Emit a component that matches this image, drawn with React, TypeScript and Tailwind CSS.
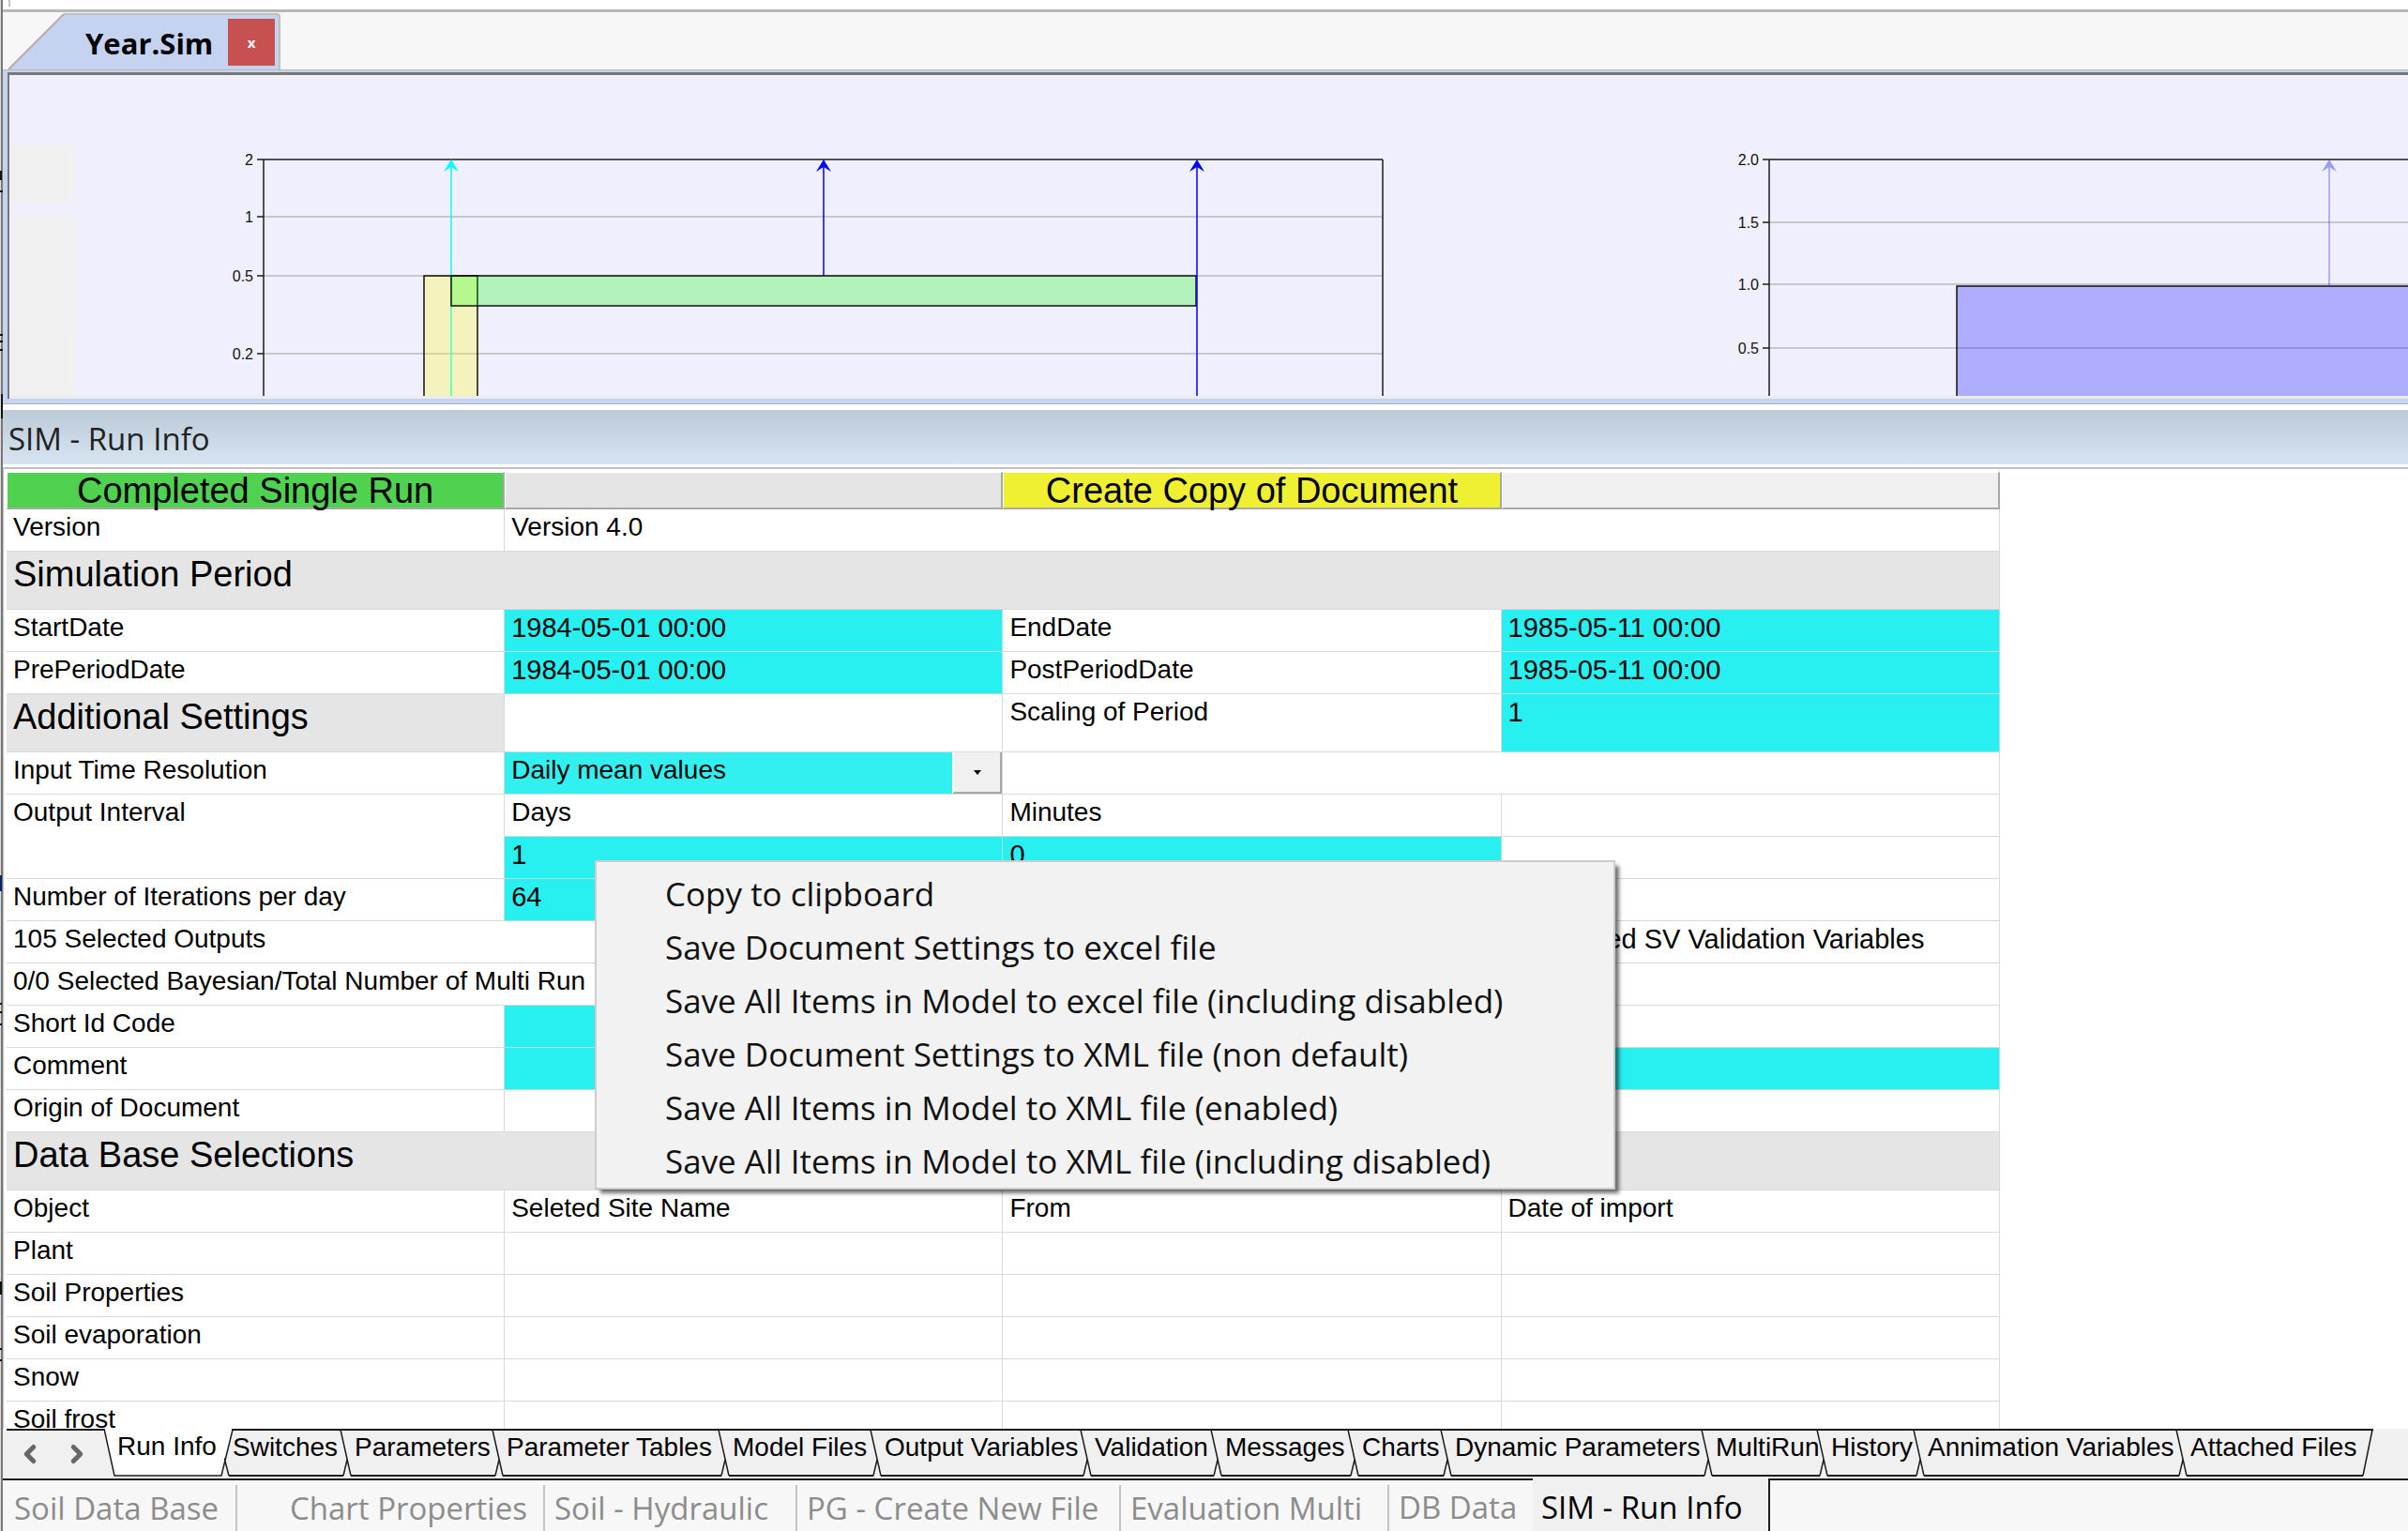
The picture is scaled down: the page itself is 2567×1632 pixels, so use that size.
import type { ReactNode } from 'react';
import { ChevronLeft, ChevronRight } from 'lucide-react';

const UI = "font-['Open_Sans','Noto_Sans',sans-serif]";

const sheetTabs = [
  { label: 'Switches', width: 'w-[116px]' },
  { label: 'Parameters', width: 'w-[162px]' },
  { label: 'Parameter Tables', width: 'w-[241px]' },
  { label: 'Model Files', width: 'w-[162px]' },
  { label: 'Output Variables', width: 'w-[224px]' },
  { label: 'Validation', width: 'w-[139px]' },
  { label: 'Messages', width: 'w-[146px]' },
  { label: 'Charts', width: 'w-[99px]' },
  { label: 'Dynamic Parameters', width: 'w-[278px]' },
  { label: 'MultiRun', width: 'w-[123px]' },
  { label: 'History', width: 'w-[103px]' },
  { label: 'Annimation Variables', width: 'w-[280px]' },
];

const windowTabs = [
  { label: 'Soil Data Base', size: 'w-[250px] pl-3' },
  { label: 'Chart Properties', size: 'w-[328px] pl-14' },
  { label: 'Soil - Hydraulic', size: 'w-[269px] pl-[10px]' },
  { label: 'PG - Create New File', size: 'w-[345px] pl-[10px]' },
  { label: 'Evaluation Multi', size: 'w-[286px] pl-[10px]' },
];

const menuItems = [
  'Copy to clipboard',
  'Save Document Settings to excel file',
  'Save All Items in Model to excel file (including disabled)',
  'Save Document Settings to XML file (non default)',
  'Save All Items in Model to XML file (enabled)',
  'Save All Items in Model to XML file (including disabled)',
];

const siteObjects = ['Plant', 'Soil Properties', 'Soil evaporation', 'Snow', 'Soil frost'];

// slivers of the window that lies behind the left edge
function LeftEdge() {
  return (
    <svg width="3" height="1632" className="block shrink-0">
      <rect width="3" height="1632" fill="#ddd" />
      <rect x="1" width="2" height="1632" fill="#777" />
      <g fill="#111">
        <rect y="182" width="2" height="10" />
        <rect y="203" width="3" height="2" />
        <rect y="356" width="3" height="2" />
        <rect y="363" width="3" height="2" />
        <rect y="372" width="3" height="2" />
        <rect x="1" y="420" width="2" height="26" />
        <rect y="1069" width="2" height="2" />
        <rect y="1078" width="2" height="2" />
        <rect y="1091" width="2" height="2" />
        <rect y="1366" width="2" height="14" />
        <rect y="1437" width="2" height="2" />
        <rect y="1449" width="2" height="2" />
      </g>
      <rect y="933" width="2" height="17" fill="#0a246a" />
    </svg>
  );
}

function DocumentTab() {
  return (
    <div className="flex h-[62px] items-end border-b border-[#b9b9b9] bg-[#f7f7f7] pl-[6px]">
      <svg width="60" height="60" className="block shrink-0">
        <path d="M0 60 L60 1 V60 Z" fill="#c5d3f1" />
        <path d="M0 60 L56 4 Q59 1 60 1" fill="none" stroke="#b0b0b0" strokeWidth="2" />
      </svg>
      <div className="flex h-[60px] items-center rounded-tr border-t-2 border-r-2 border-[#bfbfbf] bg-[#c5d3f1] pr-1 pl-[22px]">
        <span className={`${UI} w-[152px] pt-[2px] text-[31px] leading-[50px] font-bold text-black`}>Year.Sim</span>
        <button
          aria-label="Close"
          className={`${UI} flex h-[50px] w-[50px] items-center justify-center bg-[#c75050] text-[15px] leading-5 font-bold text-white`}
        >
          x
        </button>
      </div>
    </div>
  );
}

function Arrow({ x, to, color, opacity = 1 }: { x: number; to: number; color: string; opacity?: number }) {
  return (
    <g opacity={opacity}>
      <line x1={x} y1={92} x2={x} y2={to} stroke={color} strokeWidth="1.5" />
      <path d={`M${x} 90 L${x + 8} 103 L${x} 98 L${x - 8} 103 Z`} fill={color} />
    </g>
  );
}

function Axis({ x, x2, ticks }: { x: number; x2: number | string; ticks: [number, string][] }) {
  return (
    <g strokeWidth="1.5">
      {ticks.map(([y, label], i) => (
        <g key={label}>
          {i > 0 && <line x1={x} y1={y} x2={x2} y2={y} stroke="#c8c8cc" strokeWidth="2" />}
          <line x1={x - 7} y1={y} x2={x} y2={y} stroke="#1c1c1c" />
          <text x={x - 11} y={y + 6} textAnchor="end" fontSize="16" fill="#111">
            {label}
          </text>
        </g>
      ))}
      <line x1={x} y1={90} x2={x2} y2={90} stroke="#1c1c1c" />
      <line x1={x} y1={90} x2={x} y2={343} stroke="#1c1c1c" />
    </g>
  );
}

function ProfileCharts() {
  return (
    <div className="border-b border-[#b0b0b0] bg-[#c5d3f1] pt-[2px] pb-[5px] pl-[5px]">
      <div className="h-[348px] border-t-[3px] border-l-2 border-[#777] bg-[#f0effe]">
        <svg width="100%" height="345" className="block font-['Liberation_Sans',sans-serif]">
          <g fill="#f0f0f0">
            <rect x="1" y="74" width="68" height="62" />
            <rect x="4" y="149" width="68" height="123" />
            <rect x="1" y="272" width="68" height="71" />
          </g>
          <Axis x={271} x2={1464} ticks={[[90, '2'], [151, '1'], [214, '0.5'], [297, '0.2']]} />
          <line x1="1464" y1="90" x2="1464" y2="343" stroke="#1c1c1c" strokeWidth="1.5" />
          <Arrow x={471} to={343} color="#00ffff" />
          <Arrow x={868} to={214} color="#0000ff" />
          <rect x="442" y="214" width="57" height="130" fill="#ffff00" fillOpacity="0.25" stroke="#111" strokeWidth="1.5" />
          <rect x="471" y="214" width="794" height="32" fill="#00ff00" fillOpacity="0.26" stroke="#111" strokeWidth="1.5" />
          <Arrow x={1266} to={343} color="#0000ff" />
          <Axis x={1876} x2="100%" ticks={[[90, '2.0'], [157, '1.5'], [223, '1.0'], [291, '0.5']]} />
          <rect x="2076" y="225" width="1200" height="130" fill="#0000ff" fillOpacity="0.27" stroke="#111" strokeWidth="1.5" />
          <Arrow x={2473} to={224} color="#0000ff" opacity={0.35} />
          <rect x="0" y="342" width="100%" height="3" fill="#ececec" />
        </svg>
      </div>
    </div>
  );
}

function Cell({ children, span, rows, className = '' }: { children?: ReactNode; span?: number; rows?: number; className?: string }) {
  return (
    <td
      colSpan={span}
      rowSpan={rows}
      className={`border-r border-b border-[#d9d9d9] px-[7px] pt-[3px] pb-0 align-top whitespace-nowrap ${className}`}
    >
      {children}
    </td>
  );
}

function Heading({ children, span }: { children: ReactNode; span?: number }) {
  return (
    <th
      colSpan={span}
      className="h-[62px] border-r border-b border-[#d9d9d9] bg-[#e5e5e5] px-[7px] pt-1 text-left align-top text-[38px] leading-10 font-normal"
    >
      {children}
    </th>
  );
}

function InputCell({ id, value = '', span }: { id: string; value?: string; span?: number }) {
  return (
    <td colSpan={span} className="border-r border-b border-[#b9dcdc] bg-[#28f0f0] p-0 align-top">
      <input
        id={id}
        aria-label={id}
        defaultValue={value}
        className="block h-[35px] w-full bg-transparent px-[7px] pt-[3px] text-[29px] outline-none"
      />
    </td>
  );
}

function HeadButton({ children, className }: { children?: ReactNode; className: string }) {
  return (
    <th className="p-0 font-normal">
      <button
        className={`block h-10 w-full border-t border-r-2 border-b-2 border-l border-t-white border-r-[#a8a8a8] border-b-[#a8a8a8] border-l-white text-[38px] leading-[39px] ${className}`}
      >
        {children}
      </button>
    </th>
  );
}

function RunInfoTable() {
  return (
    <table className="w-[83%] table-fixed border-separate border-spacing-0 [&_tbody_tr]:h-[45px]">
      <thead>
        <tr>
          <HeadButton className="bg-[#50d250]">Completed Single Run</HeadButton>
          <HeadButton className="bg-[#e5e5e5]" />
          <HeadButton className="bg-[#f0f032]">Create Copy of Document</HeadButton>
          <HeadButton className="bg-[#f0f0f0]" />
        </tr>
      </thead>
      <tbody>
        <tr>
          <Cell>Version</Cell>
          <Cell span={3}>Version 4.0</Cell>
        </tr>
        <tr>
          <Heading span={4}>Simulation Period</Heading>
        </tr>
        <tr>
          <Cell><label htmlFor="StartDate">StartDate</label></Cell>
          <InputCell id="StartDate" value="1984-05-01 00:00" />
          <Cell><label htmlFor="EndDate">EndDate</label></Cell>
          <InputCell id="EndDate" value="1985-05-11 00:00" />
        </tr>
        <tr>
          <Cell><label htmlFor="PrePeriodDate">PrePeriodDate</label></Cell>
          <InputCell id="PrePeriodDate" value="1984-05-01 00:00" />
          <Cell><label htmlFor="PostPeriodDate">PostPeriodDate</label></Cell>
          <InputCell id="PostPeriodDate" value="1985-05-11 00:00" />
        </tr>
        <tr>
          <Heading>Additional Settings</Heading>
          <Cell />
          <Cell><label htmlFor="Scaling">Scaling of Period</label></Cell>
          <InputCell id="Scaling" value="1" />
        </tr>
        <tr>
          <Cell><label htmlFor="Resolution">Input Time Resolution</label></Cell>
          <td className="border-r border-b border-[#d9d9d9] bg-[#32f0f0] p-0 align-top">
            <div className="relative h-11">
              <select id="Resolution" className="block h-11 w-full appearance-none px-[7px] pb-[6px] outline-none">
                <option>Daily mean values</option>
              </select>
              <span className="pointer-events-none absolute top-0 right-0 flex h-11 w-[53px] items-center justify-center border-r-2 border-b-2 border-l-2 border-[#a8a8a8] border-l-white bg-[#f0f0f0]">
                <svg width="8" height="5">
                  <path d="M0 0H8L4 5Z" fill="#000" />
                </svg>
              </span>
            </div>
          </td>
          <Cell span={2} />
        </tr>
        <tr>
          <Cell rows={2}>Output Interval</Cell>
          <Cell><label htmlFor="Days">Days</label></Cell>
          <Cell><label htmlFor="Minutes">Minutes</label></Cell>
          <Cell />
        </tr>
        <tr>
          <InputCell id="Days" value="1" />
          <InputCell id="Minutes" value="0" />
          <Cell />
        </tr>
        <tr>
          <Cell><label htmlFor="Iterations">Number of Iterations per day</label></Cell>
          <InputCell id="Iterations" value="64" />
          <Cell span={2} />
        </tr>
        <tr>
          <Cell span={3} className="border-r-white">105 Selected Outputs</Cell>
          <Cell className="text-[29px]">0 Selected SV Validation Variables</Cell>
        </tr>
        <tr>
          <Cell span={4}>0/0 Selected Bayesian/Total Number of Multi Run</Cell>
        </tr>
        <tr>
          <Cell><label htmlFor="ShortId">Short Id Code</label></Cell>
          <InputCell id="ShortId" />
          <Cell span={2} />
        </tr>
        <tr>
          <Cell><label htmlFor="Comment">Comment</label></Cell>
          <InputCell id="Comment" span={3} />
        </tr>
        <tr>
          <Cell>Origin of Document</Cell>
          <Cell span={3} />
        </tr>
        <tr>
          <Heading span={4}>Data Base Selections</Heading>
        </tr>
        <tr>
          <Cell>Object</Cell>
          <Cell>Seleted Site Name</Cell>
          <Cell>From</Cell>
          <Cell>Date of import</Cell>
        </tr>
        {siteObjects.map((name) => (
          <tr key={name}>
            <Cell>{name}</Cell>
            <Cell />
            <Cell />
            <Cell />
          </tr>
        ))}
      </tbody>
    </table>
  );
}

function SheetTabs() {
  return (
    <div className="flex h-[53px] shrink-0 bg-[#f0f0f0] pl-1 text-[28px] leading-8 whitespace-nowrap text-black">
      <div className="flex h-[51px] w-[104px] shrink-0 items-center gap-5 border-t-2 border-[#1c1c1c] pl-[10px] text-[#666]">
        <button aria-label="Previous sheet"><ChevronLeft size={30} strokeWidth={4} /></button>
        <button aria-label="Next sheet"><ChevronRight size={30} strokeWidth={4} /></button>
      </div>
      <button className="relative flex h-[51px] w-[136px] shrink-0 pt-[3px] pl-[14px]">
        <svg width="138" height="52" className="absolute top-0 left-0">
          <path d="M0 0 L11 51 H126 L137 0" fill="#fff" />
          <path d="M0 0 L11 50 H125 L137 1" fill="none" stroke="#1c1c1c" strokeWidth="1.5" />
        </svg>
        <span className="relative">Run Info</span>
      </button>
      {sheetTabs.map(({ label, width }, i) => (
        <button
          key={label}
          className={`relative h-[51px] shrink-0 border-t-2 border-[#1c1c1c] pb-[14px] text-left ${width} ${i === 0 ? 'pl-[1px]' : 'pl-[15px]'}`}
        >
          {label}
          {/* bottom of the tab, and the crossing edges shared with the next one */}
          <span className={`absolute -right-[3px] bottom-0 h-[2px] bg-[#1c1c1c] ${i === 0 ? '-left-[3px]' : 'left-[11px]'}`} />
          {i === 0 && (
            <svg width="8" height="20" className="absolute bottom-0 -left-2">
              <path d="M0 0 L5 19" stroke="#1c1c1c" strokeWidth="1.5" />
            </svg>
          )}
          <svg width="18" height="50" className="absolute -right-3 bottom-0">
            <path d="M6 0 L17 49 M13 32 L9 49" fill="none" stroke="#1c1c1c" strokeWidth="1.5" />
          </svg>
        </button>
      ))}
      <button className="relative h-[51px] w-[210px] shrink-0 border-t-2 border-[#1c1c1c] pb-[14px] pl-[15px] text-left">
        Attached Files
        <span className="absolute right-[11px] bottom-0 left-[11px] h-[2px] bg-[#1c1c1c]" />
        <svg width="14" height="50" className="absolute right-0 bottom-0">
          <path d="M13 0 L3 49" stroke="#1c1c1c" strokeWidth="1.5" />
        </svg>
      </button>
    </div>
  );
}

function WindowTabs() {
  return (
    <div className={`${UI} flex h-14 shrink-0 bg-[#f7f7f7] text-[33px] leading-[50px] whitespace-nowrap text-[#8c8c8c]`}>
      {windowTabs.map(({ label, size }) => (
        <div key={label} className="shrink-0 border-t-2 border-[#1c1c1c] pt-[5px]">
          <button className={`${size} h-[49px] border-r-2 border-[#c4c4c4] text-left`}>{label}</button>
        </div>
      ))}
      <button className="w-[153px] shrink-0 border-t-2 border-[#1c1c1c] pt-[4px] pl-[10px] text-left">DB Data</button>
      <button className="w-[253px] shrink-0 border-r-2 border-[#1c1c1c] bg-[#f0f0f0] pt-[6px] pl-[9px] text-left text-black">
        SIM - Run Info
      </button>
      <div className="flex-1 border-t-2 border-[#1c1c1c]" />
    </div>
  );
}

function ContextMenu() {
  return (
    <ul
      role="menu"
      className={`${UI} absolute top-[917px] left-[634px] w-[1088px] border-2 border-[#cccccc] bg-[#f2f2f2] pt-[5px] text-[35px] leading-[57px] text-[#111] shadow-[5px_5px_4px_-1px_rgba(0,0,0,0.55)]`}
    >
      {menuItems.map((item) => (
        <li key={item} role="none">
          <button role="menuitem" className="block h-[57px] w-full pl-[73px] text-left whitespace-nowrap">
            {item}
          </button>
        </li>
      ))}
    </ul>
  );
}

export default function App() {
  return (
    <div className="relative flex h-screen overflow-hidden bg-white font-['Liberation_Sans',Arial,sans-serif] text-black">
      <LeftEdge />
      <div className="flex min-w-0 flex-1 flex-col">
        <div className="h-[13px] shrink-0 border-b-[3px] border-[#b8b8b8] pl-[6px]">
          <div className="h-[7px] w-[2px] bg-[#c4c4c4]" />
        </div>
        <DocumentTab />
        <ProfileCharts />
        <h2
          className={`${UI} mt-[6px] h-[58px] shrink-0 bg-linear-to-b from-[#bccad8] to-[#d7e4f2] pl-[6px] text-[33px] leading-[62px] text-[#222]`}
        >
          SIM - Run Info
        </h2>
        <main className="mt-[3px] min-h-0 flex-1 overflow-hidden border-t-2 border-l border-[#c0c0c0] pt-[3px] pl-[3px] text-[28px] leading-8">
          <RunInfoTable />
        </main>
        <SheetTabs />
        <WindowTabs />
      </div>
      <ContextMenu />
    </div>
  );
}
